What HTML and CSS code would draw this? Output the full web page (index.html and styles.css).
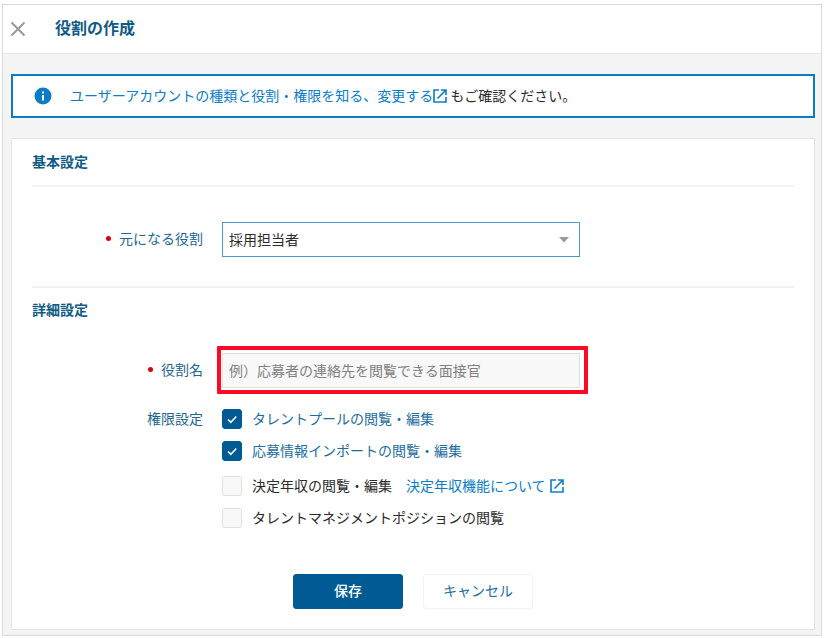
FILE: index.html
```html
<!DOCTYPE html>
<html lang="ja">
  <head>
    <meta charset="utf-8">
    <title>役割の作成</title>
    <link rel="stylesheet" href="styles.css">
  </head>
  <body>
    <div class="window">
      <header class="header">
        <button class="close" type="button" aria-label="閉じる">
          <svg width="16" height="16" viewBox="0 0 16 16"><path d="M1.5 1.5l13 13M14.5 1.5l-13 13"/></svg>
        </button>
        <h1 class="title">役割の作成</h1>
      </header>

      <main class="content">
        <div class="notice">
          <svg class="info" width="18" height="18" viewBox="0 0 18 18">
            <circle cx="9" cy="9" r="8.5" fill="#0b7dc6"/>
            <path d="M8 4.5h2v2H8zM8 8h2v5.5H8z" fill="#fff"/>
          </svg>
          <p class="notice-text">
            <a class="link" href="#">ユーザーアカウントの種類と役割・権限を知る、変更する<svg class="external" width="14" height="14" viewBox="1 1 14 14"><path d="M7 2H2v12h12V9M9 2h5v5M14 2L5.5 10.5"/></svg></a>
            もご確認ください。
          </p>
        </div>

        <form class="card">
          <section class="section">
            <h2 class="section-title line">基本設定</h2>
            <div class="row">
              <label class="label required" for="baseRole">元になる役割</label>
              <div class="field">
                <select class="control select" id="baseRole">
                  <option>採用担当者</option>
                </select>
              </div>
            </div>
          </section>

          <section class="section detail">
            <h2 class="section-title">詳細設定</h2>
            <div class="row">
              <label class="label required" for="roleName">役割名</label>
              <div class="field highlight">
                <input class="control input" id="roleName" type="text" placeholder="例）応募者の連絡先を閲覧できる面接官">
              </div>
            </div>
            <div class="row permissions" role="group" aria-labelledby="permLabel">
              <span class="label" id="permLabel">権限設定</span>
              <div class="checks">
                <div class="checks-group">
                  <label class="check"><input type="checkbox" checked><span>タレントプールの閲覧・編集</span></label>
                  <label class="check"><input type="checkbox" checked><span>応募情報インポートの閲覧・編集</span></label>
                </div>
                <div class="checks-group">
                  <div class="check-line">
                    <label class="check"><input type="checkbox"><span>決定年収の閲覧・編集</span></label>
                    <a class="link spaced" href="#">決定年収機能について<svg class="external" width="14" height="14" viewBox="1 1 14 14"><path d="M7 2H2v12h12V9M9 2h5v5M14 2L5.5 10.5"/></svg></a>
                  </div>
                  <label class="check"><input type="checkbox"><span>タレントマネジメントポジションの閲覧</span></label>
                </div>
              </div>
            </div>
          </section>

          <div class="actions">
            <button class="btn primary" type="submit">保存</button>
            <button class="btn" type="button">キャンセル</button>
          </div>
        </form>
      </main>
    </div>
  </body>
</html>
```
FILE: styles.css
```css
* {
  box-sizing: border-box;
}

body {
  margin: 0;
  padding: 4px 2px;
  background-color: #fff;
  color: #2b2b2b;
  font-family: "Noto Sans CJK JP", sans-serif;
  font-size: 14px;
  line-height: 20px;
}

h1, h2, p {
  margin: 0;
}

button, input, select {
  font: inherit;
}

.window {
  border: 1px solid #d9d9d9;
  background-color: #f4f4f4;
}

.header {
  display: flex;
  align-items: center;
  gap: 29px;
  height: 49px;
  padding: 0 7px;
  border-bottom: 1px solid #e6e6e6;
  background-color: #fff;
}

.close {
  display: flex;
  padding: 0;
  border: 0;
  background: none;
}

.close path {
  fill: none;
  stroke: #999;
  stroke-width: 2;
}

.title {
  padding-bottom: 5px;
  color: #105b85;
  font-size: 16px;
  line-height: 24px;
}

.content {
  padding: 20px 6px 5px 8px;
}

.notice {
  display: flex;
  align-items: center;
  gap: 18px;
  min-height: 44px;
  padding: 0 21px;
  border: 2px solid #0b7dc6;
  background-color: #fff;
}

.notice-text {
  padding-bottom: 2px;
}

.info {
  flex: none;
}

.link {
  color: #0b7dc6;
  text-decoration: none;
}

.external {
  vertical-align: -2px;
}

.external path {
  fill: none;
  stroke: #0b7dc6;
  stroke-width: 1.6;
}

.spaced .external {
  margin-left: 4px;
}

.card {
  margin-top: 20px;
  padding: 12px 20px 20px;
  border: 1px solid #e4e4e4;
  background-color: #fff;
}

.section-title {
  color: #105b85;
  font-size: 14px;
  line-height: 20px;
}

.line {
  padding-bottom: 14px;
  border-bottom: 2px solid #f2f2f2;
}

.detail {
  margin-top: 29px;
  padding-top: 11px;
  border-top: 2px solid #f2f2f2;
}

.row {
  display: grid;
  grid-template-columns: 171px minmax(0, 358px);
  column-gap: 19px;
  align-items: center;
  margin-top: 35px;
}

.detail .row {
  margin-top: 34px;
}

.detail .permissions {
  align-items: start;
  margin-top: 21px;
}

.label {
  padding-bottom: 4px;
  color: #1e6690;
  text-align: right;
}

.permissions .label,
.check span,
.check-line .link {
  padding-bottom: 2px;
  line-height: 18px;
}

.required::before {
  content: "";
  display: inline-block;
  width: 5px;
  height: 5px;
  margin-right: 8px;
  border-radius: 50%;
  background-color: #d7000f;
  vertical-align: 3px;
}

.field {
  position: relative;
}

.control {
  display: block;
  width: 100%;
  height: 35px;
  padding: 0 6px 2px;
  border: 1px solid #4a9bd2;
  border-radius: 0;
  color: #2b2b2b;
}

.select {
  appearance: none;
  background: #fff url("data:image/svg+xml,%3Csvg xmlns='http://www.w3.org/2000/svg' width='10' height='6'%3E%3Cpath d='M0 0h10L5 5.5z' fill='%23999'/%3E%3C/svg%3E") no-repeat right 10px center;
}

.input {
  border-color: #e0e0e0;
  background-color: #f8f8f8;
}

.input::placeholder {
  color: #808080;
}

.highlight::after {
  content: "";
  position: absolute;
  inset: -7px -8px -6px -5px;
  border: 4px solid #fb0a25;
  border-radius: 1px;
  pointer-events: none;
}

.checks {
  display: grid;
  gap: 15px;
}

.checks-group {
  display: grid;
  gap: 12px;
}

.check-line {
  display: flex;
  gap: 14px;
}

.check {
  display: flex;
  align-items: center;
  gap: 10px;
}

.check input {
  appearance: none;
  flex: none;
  width: 20px;
  height: 20px;
  margin: 0;
  border: 1px solid #e0e0e0;
  border-radius: 3px;
  background-color: #f8f8f8;
}

.check input:checked {
  border-color: #005b94;
  background: #005b94 url("data:image/svg+xml,%3Csvg xmlns='http://www.w3.org/2000/svg' width='18' height='18'%3E%3Cpath d='M5 9.5L7.8 12.3L13.3 6.5' fill='none' stroke='%23fff' stroke-width='1.6'/%3E%3C/svg%3E") no-repeat center;
}

.check input:checked + span {
  color: #1e6e9f;
}

.actions {
  display: flex;
  justify-content: center;
  gap: 20px;
  margin-top: 46px;
}

.btn {
  width: 110px;
  height: 35px;
  padding: 0 0 4px;
  border: 1px solid #edf4f9;
  border-radius: 3px;
  background-color: #fff;
  color: #1e6e9f;
}

.primary {
  border-color: #005b94;
  background-color: #005b94;
  color: #fff;
  font-weight: 500;
}
```
